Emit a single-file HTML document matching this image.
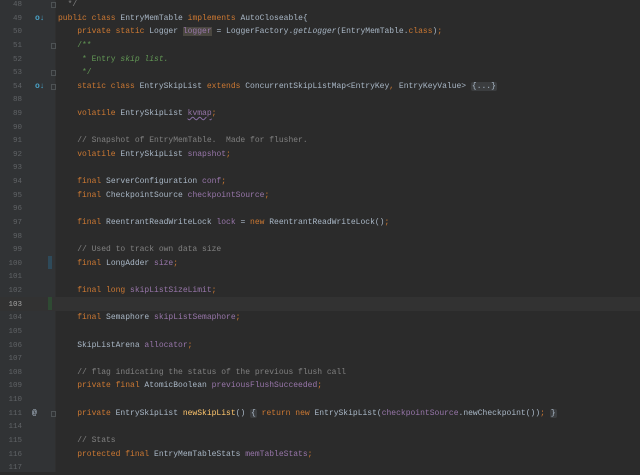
<!DOCTYPE html>
<html><head><meta charset="utf-8"><style>
html,body{margin:0;padding:0;background:#2b2b2b;width:640px;height:472px;overflow:hidden}
#g{position:absolute;left:0;top:0;width:55px;height:472px;background:#313335}
#sep{position:absolute;left:55px;top:0;width:1px;height:472px;background:#2f2f2f}
#cl{position:absolute;left:0;top:297px;width:640px;height:14px;background:#323232}
.l{position:absolute;left:0;height:14px;line-height:14px;font-family:"Liberation Mono",monospace;font-size:8px;white-space:pre;color:#a9b7c6}
.n{position:absolute;left:0;width:22px;text-align:right;color:#606366;font-size:7.5px}
.c{position:absolute;left:58px}
.k{color:#cc7832}.f{color:#9876aa}.cm{color:#808080}.d{color:#629755}
.m{color:#ffc66d}.i{font-style:italic}
.fold{background:#3b3d3f;color:#a9b7c6;padding:0 1px;border-radius:2px}
.ic{position:absolute;left:35px;color:#4aa3c8;font-weight:bold;font-size:8px}
.fm{position:absolute;left:51px;width:5px;height:6px;border:1px solid #4e5254;top:4px;box-sizing:border-box}
.bar{position:absolute;left:48px;width:4px;height:13px}
</style></head><body>
<div id="g"></div><div id="sep"></div><div id="cl"></div>
<div class="bar" style="top:256px;background:#2e4a5a"></div>
<div class="bar" style="top:297px;background:#2f4a33"></div>
<div class="l" style="top:-2px"><span class="n">48</span><span class="fm"></span><span class="c cm">  */</span></div>
<div class="l" style="top:11.6px"><span class="n">49</span><span class="ic">o↓</span><span class="c"><span class="k">public class </span>EntryMemTable <span class="k">implements </span>AutoCloseable{</span></div>
<div class="l" style="top:25.2px"><span class="n">50</span><span class="c">    <span class="k">private static </span>Logger <span class="f" style="background:#4a4740">logger</span> = LoggerFactory.<span class="i">getLogger</span>(EntryMemTable.<span class="k">class</span>)<span class="k">;</span></span></div>
<div class="l" style="top:38.9px"><span class="n">51</span><span class="fm"></span><span class="c d">    /**</span></div>
<div class="l" style="top:52.5px"><span class="n">52</span><span class="c d">     * Entry <span class="i">skip list.</span></span></div>
<div class="l" style="top:66.1px"><span class="n">53</span><span class="fm"></span><span class="c d">     */</span></div>
<div class="l" style="top:79.7px"><span class="n">54</span><span class="ic">o↓</span><span class="fm"></span><span class="c">    <span class="k">static class </span>EntrySkipList <span class="k">extends </span>ConcurrentSkipListMap&lt;EntryKey<span class="k">, </span>EntryKeyValue&gt; <span class="fold">{...}</span></span></div>
<div class="l" style="top:93.3px"><span class="n">88</span></div>
<div class="l" style="top:107px"><span class="n">89</span><span class="c">    <span class="k">volatile </span>EntrySkipList <span class="f" style="text-decoration:underline wavy #8a6fa5">kvmap</span><span class="k">;</span></span></div>
<div class="l" style="top:120.6px"><span class="n">90</span></div>
<div class="l" style="top:134.2px"><span class="n">91</span><span class="c cm">    // Snapshot of EntryMemTable.  Made for flusher.</span></div>
<div class="l" style="top:147.8px"><span class="n">92</span><span class="c">    <span class="k">volatile </span>EntrySkipList <span class="f">snapshot</span><span class="k">;</span></span></div>
<div class="l" style="top:161.4px"><span class="n">93</span></div>
<div class="l" style="top:175.1px"><span class="n">94</span><span class="c">    <span class="k">final </span>ServerConfiguration <span class="f">conf</span><span class="k">;</span></span></div>
<div class="l" style="top:188.7px"><span class="n">95</span><span class="c">    <span class="k">final </span>CheckpointSource <span class="f">checkpointSource</span><span class="k">;</span></span></div>
<div class="l" style="top:202.3px"><span class="n">96</span></div>
<div class="l" style="top:215.9px"><span class="n">97</span><span class="c">    <span class="k">final </span>ReentrantReadWriteLock <span class="f">lock</span> = <span class="k">new </span>ReentrantReadWriteLock()<span class="k">;</span></span></div>
<div class="l" style="top:229.5px"><span class="n">98</span></div>
<div class="l" style="top:243.2px"><span class="n">99</span><span class="c cm">    // Used to track own data size</span></div>
<div class="l" style="top:256.8px"><span class="n">100</span><span class="c">    <span class="k">final </span>LongAdder <span class="f">size</span><span class="k">;</span></span></div>
<div class="l" style="top:270.4px"><span class="n">101</span></div>
<div class="l" style="top:284px"><span class="n">102</span><span class="c">    <span class="k">final long </span><span class="f">skipListSizeLimit</span><span class="k">;</span></span></div>
<div class="l" style="top:297.6px"><span class="n" style="color:#a4a3a3">103</span></div>
<div class="l" style="top:311.3px"><span class="n">104</span><span class="c">    <span class="k">final </span>Semaphore <span class="f">skipListSemaphore</span><span class="k">;</span></span></div>
<div class="l" style="top:324.9px"><span class="n">105</span></div>
<div class="l" style="top:338.5px"><span class="n">106</span><span class="c">    SkipListArena <span class="f">allocator</span><span class="k">;</span></span></div>
<div class="l" style="top:352.1px"><span class="n">107</span></div>
<div class="l" style="top:365.7px"><span class="n">108</span><span class="c cm">    // flag indicating the status of the previous flush call</span></div>
<div class="l" style="top:379.4px"><span class="n">109</span><span class="c">    <span class="k">private final </span>AtomicBoolean <span class="f">previousFlushSucceeded</span><span class="k">;</span></span></div>
<div class="l" style="top:393px"><span class="n">110</span></div>
<div class="l" style="top:406.6px"><span class="n">111</span><span class="ic" style="color:#a9b7c6;left:32px">@</span><span class="fm"></span><span class="c">    <span class="k">private </span>EntrySkipList <span class="m">newSkipList</span>() <span class="fold">{</span> <span class="k">return new </span>EntrySkipList(<span class="f">checkpointSource</span>.newCheckpoint())<span class="k">;</span> <span class="fold">}</span></span></div>
<div class="l" style="top:420.2px"><span class="n">114</span></div>
<div class="l" style="top:433.8px"><span class="n">115</span><span class="c cm">    // Stats</span></div>
<div class="l" style="top:447.5px"><span class="n">116</span><span class="c">    <span class="k">protected final </span>EntryMemTableStats <span class="f">memTableStats</span><span class="k">;</span></span></div>
<div class="l" style="top:461.1px"><span class="n">117</span></div>
</body></html>
